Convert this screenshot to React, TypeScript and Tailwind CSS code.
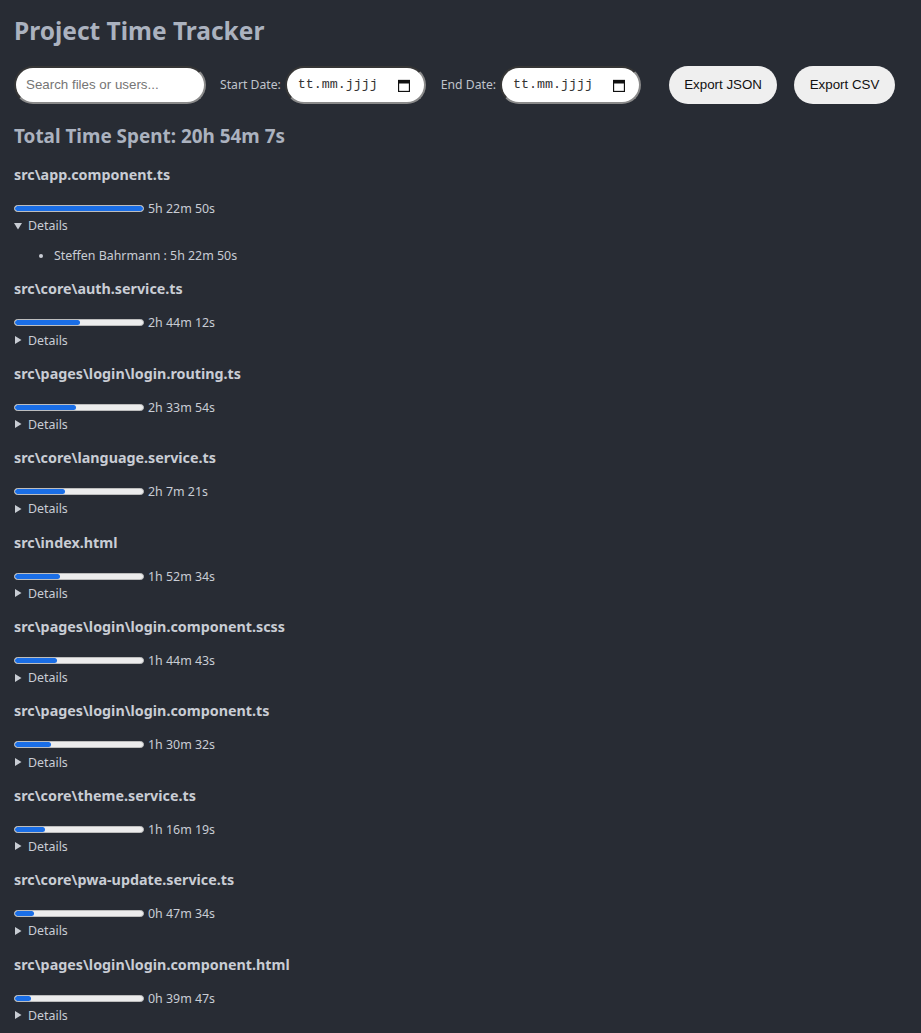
import React from "react";

const files: { name: string; time: string; secs: number; open?: boolean; users?: string[] }[] = [
  { name: "src\\app.component.ts", time: "5h 22m 50s", secs: 19370, open: true, users: ["Steffen Bahrmann : 5h 22m 50s"] },
  { name: "src\\core\\auth.service.ts", time: "2h 44m 12s", secs: 9852 },
  { name: "src\\pages\\login\\login.routing.ts", time: "2h 33m 54s", secs: 9234 },
  { name: "src\\core\\language.service.ts", time: "2h 7m 21s", secs: 7641 },
  { name: "src\\index.html", time: "1h 52m 34s", secs: 6754 },
  { name: "src\\pages\\login\\login.component.scss", time: "1h 44m 43s", secs: 6283 },
  { name: "src\\pages\\login\\login.component.ts", time: "1h 30m 32s", secs: 5432 },
  { name: "src\\core\\theme.service.ts", time: "1h 16m 19s", secs: 4579 },
  { name: "src\\core\\pwa-update.service.ts", time: "0h 47m 34s", secs: 2854 },
  { name: "src\\pages\\login\\login.component.html", time: "0h 39m 47s", secs: 2387 },
];

const MAX = 19370;

function CalendarIcon() {
  return (
    <svg width="12" height="13" viewBox="0 0 12 13" className="shrink-0">
      <rect x="0.5" y="1.5" width="11" height="11" fill="none" stroke="#111" strokeWidth="1.3" />
      <rect x="0.5" y="1.5" width="11" height="3" fill="#111" />
    </svg>
  );
}

function Triangle({ open }: { open?: boolean }) {
  return open ? (
    <svg width="8" height="8" viewBox="0 0 8 8" className="mr-[6px] shrink-0">
      <polygon points="0,1 8,1 4,7.5" fill="#c9cdd4" />
    </svg>
  ) : (
    <svg width="8" height="8" viewBox="0 0 8 8" className="mr-[6px] shrink-0">
      <polygon points="1,0 7.5,4 1,8" fill="#c9cdd4" />
    </svg>
  );
}

function DateField() {
  return (
    <div className="flex h-[38px] w-[141px] items-center justify-between rounded-full border-2 border-[#8a8a8a] bg-white pl-[11px] pr-[14px] [border-style:inset]">
      <span className="font-['Liberation_Mono',monospace] text-[13.33px] text-[#333]">tt.mm.jjjj</span>
      <CalendarIcon />
    </div>
  );
}

export default function App() {
  return (
    <div className="min-h-[1033px] bg-[#282c34] px-[14px] font-['Noto_Sans',sans-serif] text-[#c9cdd4]">
      <h1 className="pt-[15px] text-[24.5px] font-bold leading-[32px] text-[#abb2bf]">Project Time Tracker</h1>
      <div className="mt-[19px] flex h-[38px] items-center">
        <div className="flex h-[38px] w-[192px] items-center rounded-full border-2 border-[#8a8a8a] bg-white px-[10px] [border-style:inset]">
          <span className="font-['Liberation_Sans',Arial,sans-serif] text-[13.33px] text-[#757575]">Search files or users...</span>
        </div>
        <span className="ml-[14px] mr-[4px] text-[12.2px] text-[#c0c4cc]">Start Date:</span>
        <DateField />
        <span className="ml-[15px] mr-[4px] text-[12.2px] text-[#c0c4cc]">End Date:</span>
        <DateField />
        <button className="ml-[28px] h-[38px] w-[108px] rounded-full bg-[#efefef] font-['Liberation_Sans',Arial,sans-serif] text-[13.33px] text-[#111]">Export JSON</button>
        <button className="ml-[17px] h-[38px] w-[101px] rounded-full bg-[#efefef] font-['Liberation_Sans',Arial,sans-serif] text-[13.33px] text-[#111]">Export CSV</button>
      </div>
      <h2 className="mt-[20px] text-[18.9px] font-bold leading-[24px] text-[#abb2bf]">Total Time Spent: 20h 54m 7s</h2>
      <div className="pt-[2px]">
        {files.map((f) => (
          <div key={f.name}>
            <h3 className="mt-[15px] mb-[15px] text-[14.3px] font-bold leading-[20px] text-[#c9cdd4]">{f.name}</h3>
            <div className="flex h-[17px] items-center">
              <div className="h-[7px] w-[130px] overflow-hidden rounded-full border border-[#bdbdbd] bg-[#ececec]">
                <div className="h-full rounded-full bg-[#1a6ee6]" style={{ width: `${(f.secs / MAX) * 100}%` }} />
              </div>
              <span className="ml-[4px] text-[12.4px] leading-[17px]">{f.time}</span>
            </div>
            <div className="flex h-[17.4px] items-center text-[12.4px] leading-[17px]">
              <Triangle open={f.open} />
              <span>Details</span>
            </div>
            {f.open && f.users && (
              <ul className="mt-[13px] list-disc pl-[40px] text-[12.4px] leading-[17px]">
                {f.users.map((u) => (
                  <li key={u}>{u}</li>
                ))}
              </ul>
            )}
          </div>
        ))}
      </div>
    </div>
  );
}
